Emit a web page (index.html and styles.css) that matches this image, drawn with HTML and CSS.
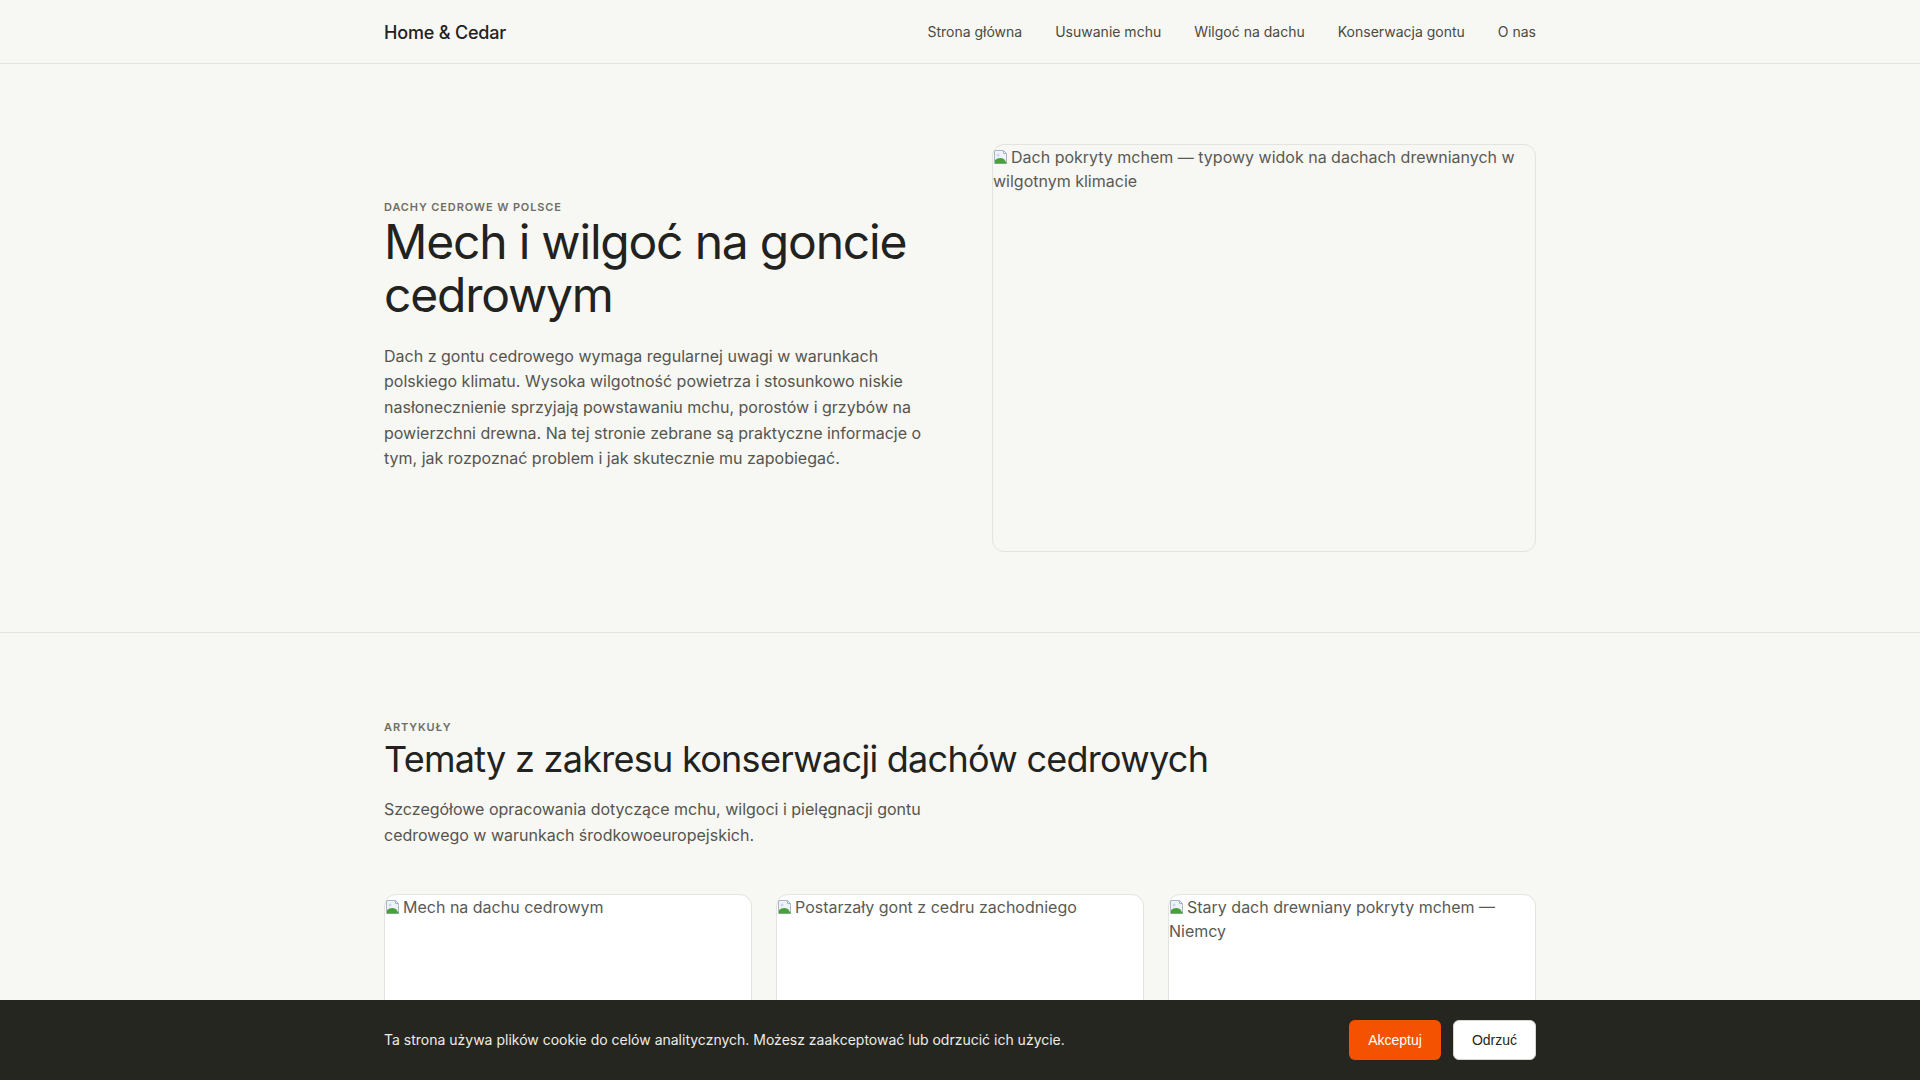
FILE: index.html
```html
<!DOCTYPE html>
<html lang="pl">
<head>
    <meta charset="UTF-8">
    <meta name="viewport" content="width=device-width, initial-scale=1.0">
    <title>Home &amp; Cedar — Mech i wilgoć na goncie cedrowym</title>
    <link rel="stylesheet" href="styles.css">
</head>
<body>

<header class="site-header">
    <div class="container header-inner">
        <a class="logo" href="#">Home &amp; Cedar</a>
        <nav class="nav">
            <a href="#">Strona główna</a>
            <a href="#">Usuwanie mchu</a>
            <a href="#">Wilgoć na dachu</a>
            <a href="#">Konserwacja gontu</a>
            <a href="#">O nas</a>
        </nav>
    </div>
</header>

<section class="hero">
    <div class="container hero-grid">
        <div class="hero-text">
            <p class="eyebrow">Dachy cedrowe w Polsce</p>
            <h1>Mech i wilgoć na goncie cedrowym</h1>
            <p class="lead">Dach z gontu cedrowego wymaga regularnej uwagi w warunkach polskiego klimatu. Wysoka wilgotność powietrza i stosunkowo niskie nasłonecznienie sprzyjają powstawaniu mchu, porostów i grzybów na powierzchni drewna. Na tej stronie zebrane są praktyczne informacje o tym, jak rozpoznać problem i jak skutecznie mu zapobiegać.</p>
        </div>
        <div class="hero-image">
            <span class="alt"><svg class="broken" width="16" height="16" viewBox="0 0 16 16"><path d="M1.5 1.5h9l3 3v10h-12z" fill="#eef3fb" stroke="#a9b4c4"/><path d="M10.5 1.5v3h3" fill="none" stroke="#a9b4c4"/><path d="M2 14.5 L2 11 Q6 7.5 11 10 L14 14.5z" fill="#4aa03a"/><circle cx="5" cy="6" r="1.6" fill="#c9d8ee"/></svg>Dach pokryty mchem — typowy widok na dachach drewnianych w wilgotnym klimacie</span>
        </div>
    </div>
</section>

<section class="articles">
    <div class="container">
        <p class="eyebrow">Artykuły</p>
        <h2>Tematy z zakresu konserwacji dachów cedrowych</h2>
        <p class="lead narrow">Szczegółowe opracowania dotyczące mchu, wilgoci i pielęgnacji gontu cedrowego w warunkach środkowoeuropejskich.</p>

        <div class="cards">
            <article class="card">
                <div class="card-image">
                    <span class="alt"><svg class="broken" width="16" height="16" viewBox="0 0 16 16"><path d="M1.5 1.5h9l3 3v10h-12z" fill="#eef3fb" stroke="#a9b4c4"/><path d="M10.5 1.5v3h3" fill="none" stroke="#a9b4c4"/><path d="M2 14.5 L2 11 Q6 7.5 11 10 L14 14.5z" fill="#4aa03a"/><circle cx="5" cy="6" r="1.6" fill="#c9d8ee"/></svg>Mech na dachu cedrowym</span>
                </div>
                <div class="card-body">
                    <h3>Usuwanie mchu z gontu</h3>
                    <p>Bezpieczne metody czyszczenia dachu bez uszkadzania drewna.</p>
                </div>
            </article>
            <article class="card">
                <div class="card-image">
                    <span class="alt"><svg class="broken" width="16" height="16" viewBox="0 0 16 16"><path d="M1.5 1.5h9l3 3v10h-12z" fill="#eef3fb" stroke="#a9b4c4"/><path d="M10.5 1.5v3h3" fill="none" stroke="#a9b4c4"/><path d="M2 14.5 L2 11 Q6 7.5 11 10 L14 14.5z" fill="#4aa03a"/><circle cx="5" cy="6" r="1.6" fill="#c9d8ee"/></svg>Postarzały gont z cedru zachodniego</span>
                </div>
                <div class="card-body">
                    <h3>Wilgoć na dachu</h3>
                    <p>Skąd bierze się wilgoć i jak wpływa na trwałość gontu.</p>
                </div>
            </article>
            <article class="card">
                <div class="card-image">
                    <span class="alt"><svg class="broken" width="16" height="16" viewBox="0 0 16 16"><path d="M1.5 1.5h9l3 3v10h-12z" fill="#eef3fb" stroke="#a9b4c4"/><path d="M10.5 1.5v3h3" fill="none" stroke="#a9b4c4"/><path d="M2 14.5 L2 11 Q6 7.5 11 10 L14 14.5z" fill="#4aa03a"/><circle cx="5" cy="6" r="1.6" fill="#c9d8ee"/></svg>Stary dach drewniany pokryty mchem — Niemcy</span>
                </div>
                <div class="card-body">
                    <h3>Konserwacja gontu</h3>
                    <p>Impregnacja i regularna pielęgnacja dachu cedrowego.</p>
                </div>
            </article>
        </div>
    </div>
</section>

<div class="cookie-bar">
    <div class="container cookie-inner">
        <p>Ta strona używa plików cookie do celów analitycznych. Możesz zaakceptować lub odrzucić ich użycie.</p>
        <div class="cookie-buttons">
            <button class="btn btn-accept">Akceptuj</button>
            <button class="btn btn-reject">Odrzuć</button>
        </div>
    </div>
</div>

</body>
</html>
```

FILE: styles.css
```css
* {
    box-sizing: border-box;
}
body {
    margin: 0;
    font-family: Inter, "Noto Sans", sans-serif;
    font-size: 16px;
    line-height: 1.6;
    color: #22221e;
    background-color: #f7f7f3;
}
a {
    color: inherit;
    text-decoration: none;
}
.container {
    width: 1152px;
    margin: 0 auto;
}

/* header */
.site-header {
    border-bottom: 1px solid #e4e4de;
}
.header-inner {
    height: 63px;
    display: flex;
    align-items: center;
    justify-content: space-between;
}
.logo {
    margin-top: 3px;
    font-size: 18px;
    font-weight: 500;
    letter-spacing: -0.01em;
}
.nav {
    display: flex;
    gap: 33px;
    margin-top: 2px;
}
.nav a {
    font-size: 14px;
    color: #4a4a44;
}

/* hero */
.hero {
    padding: 80px 0;
    border-bottom: 1px solid #e4e4de;
}
.hero-grid {
    display: grid;
    grid-template-columns: 1fr 1fr;
    gap: 64px;
    align-items: center;
}
.eyebrow {
    margin: 0 0 1px;
    font-size: 11px;
    line-height: 16px;
    font-weight: 600;
    letter-spacing: 0.08em;
    text-transform: uppercase;
    color: #6e6e66;
}
h1 {
    margin: 0 0 22px;
    font-size: 48px;
    line-height: 1.1;
    font-weight: 400;
    letter-spacing: -0.025em;
}
.lead {
    margin: 0 0 25px;
    color: #55554e;
}
.hero-image {
    aspect-ratio: 4 / 3;
    border: 1px solid #e4e4de;
    border-radius: 12px;
    overflow: hidden;
}
.alt {
    display: block;
    line-height: 24px;
    color: #5a5a54;
}
.broken {
    vertical-align: -2px;
    margin-right: 2px;
}

/* articles */
.articles {
    padding: 86px 0 80px;
}
.articles .eyebrow {
    margin-bottom: 3px;
}
h2 {
    margin: 0 0 16px;
    font-size: 36px;
    line-height: 1.2;
    font-weight: 400;
    letter-spacing: -0.02em;
}
.narrow {
    max-width: 560px;
    margin-bottom: 46px;
}
.cards {
    display: grid;
    grid-template-columns: repeat(3, 1fr);
    gap: 24px;
}
.card {
    background-color: #fff;
    border: 1px solid #e4e4de;
    border-radius: 12px;
    overflow: hidden;
}
.card-image {
    aspect-ratio: 16 / 10;
}
.card-body {
    padding: 20px;
}
.card-body h3 {
    margin: 0 0 6px;
    font-size: 18px;
    font-weight: 500;
}
.card-body p {
    margin: 0;
    font-size: 14px;
    color: #55554e;
}

/* cookie bar */
.cookie-bar {
    position: fixed;
    left: 0;
    right: 0;
    bottom: 0;
    height: 80px;
    background-color: #262620;
    color: #ecece6;
}
.cookie-inner {
    height: 100%;
    display: flex;
    align-items: center;
    justify-content: space-between;
}
.cookie-inner p {
    margin: 0;
    font-size: 14px;
}
.cookie-buttons {
    display: flex;
    gap: 12px;
}
.btn {
    font-family: "Liberation Sans", Arial, sans-serif;
    font-size: 14px;
    padding: 11px 18px;
    border-radius: 6px;
    border: 1px solid transparent;
    cursor: pointer;
}
.btn-accept {
    background-color: #f55200;
    color: #fff;
}
.btn-reject {
    background-color: #fff;
    border-color: #d6d6d0;
    color: #262620;
}
```
